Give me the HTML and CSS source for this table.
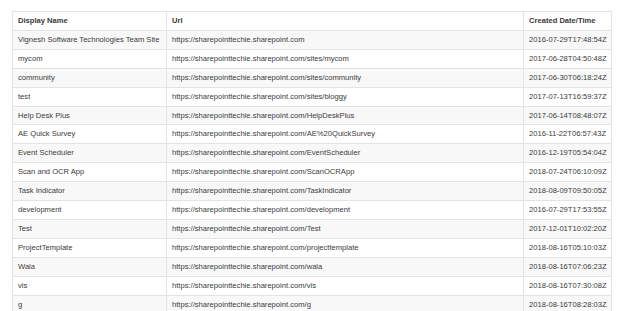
FILE: index.html
```html
<!DOCTYPE html>
<html lang="en">
<head>
    <meta charset="UTF-8">
    <meta name="viewport" content="width=device-width, initial-scale=1.0">
    <title>Site Collections</title>
    <link rel="stylesheet" href="styles.css">
</head>
<body>
    <div class="container">
        <table class="sites-table">
            <thead>
                <tr>
                    <th class="col-name">Display Name</th>
                    <th class="col-url">Url</th>
                    <th class="col-date">Created Date/Time</th>
                </tr>
            </thead>
            <tbody>
                <tr><td>Vignesh Software Technologies Team Site</td><td>https://sharepointtechie.sharepoint.com</td><td>2016-07-29T17:48:54Z</td></tr>
                <tr><td>mycom</td><td>https://sharepointtechie.sharepoint.com/sites/mycom</td><td>2017-06-28T04:50:48Z</td></tr>
                <tr><td>community</td><td>https://sharepointtechie.sharepoint.com/sites/community</td><td>2017-06-30T06:18:24Z</td></tr>
                <tr><td>test</td><td>https://sharepointtechie.sharepoint.com/sites/bloggy</td><td>2017-07-13T16:59:37Z</td></tr>
                <tr><td>Help Desk Plus</td><td>https://sharepointtechie.sharepoint.com/HelpDeskPlus</td><td>2017-06-14T08:48:07Z</td></tr>
                <tr><td>AE Quick Survey</td><td>https://sharepointtechie.sharepoint.com/AE%20QuickSurvey</td><td>2016-11-22T06:57:43Z</td></tr>
                <tr><td>Event Scheduler</td><td>https://sharepointtechie.sharepoint.com/EventScheduler</td><td>2016-12-19T05:54:04Z</td></tr>
                <tr><td>Scan and OCR App</td><td>https://sharepointtechie.sharepoint.com/ScanOCRApp</td><td>2018-07-24T06:10:09Z</td></tr>
                <tr><td>Task Indicator</td><td>https://sharepointtechie.sharepoint.com/TaskIndicator</td><td>2018-08-09T09:50:05Z</td></tr>
                <tr><td>development</td><td>https://sharepointtechie.sharepoint.com/development</td><td>2016-07-29T17:53:55Z</td></tr>
                <tr><td>Test</td><td>https://sharepointtechie.sharepoint.com/Test</td><td>2017-12-01T10:02:20Z</td></tr>
                <tr><td>ProjectTemplate</td><td>https://sharepointtechie.sharepoint.com/projecttemplate</td><td>2018-08-16T05:10:03Z</td></tr>
                <tr><td>Wala</td><td>https://sharepointtechie.sharepoint.com/wala</td><td>2018-08-16T07:06:23Z</td></tr>
                <tr><td>vis</td><td>https://sharepointtechie.sharepoint.com/vis</td><td>2018-08-16T07:30:08Z</td></tr>
                <tr><td>g</td><td>https://sharepointtechie.sharepoint.com/g</td><td>2018-08-16T08:28:03Z</td></tr>
            </tbody>
        </table>
    </div>
</body>
</html>
```

FILE: styles.css
```css
body {
    margin: 0;
    background: #fff;
    font-family: "Liberation Sans", Arial, sans-serif;
    color: #3a3a3a;
}

.container {
    padding: 11px 12px 0 12px;
}

.sites-table {
    width: 600px;
    border-collapse: collapse;
    table-layout: fixed;
    font-size: 7.6px;
}

.sites-table th,
.sites-table td {
    border: 1px solid #e3e3e3;
    padding: 0 4px 0 5px;
    line-height: 17.9px;
    text-align: left;
    white-space: nowrap;
    overflow: hidden;
}

.sites-table th {
    font-weight: bold;
}

.col-name {
    width: 144px;
}

.col-url {
    width: 347px;
}

.sites-table tbody tr:nth-child(odd) {
    background-color: #f8f8f8;
}
```
